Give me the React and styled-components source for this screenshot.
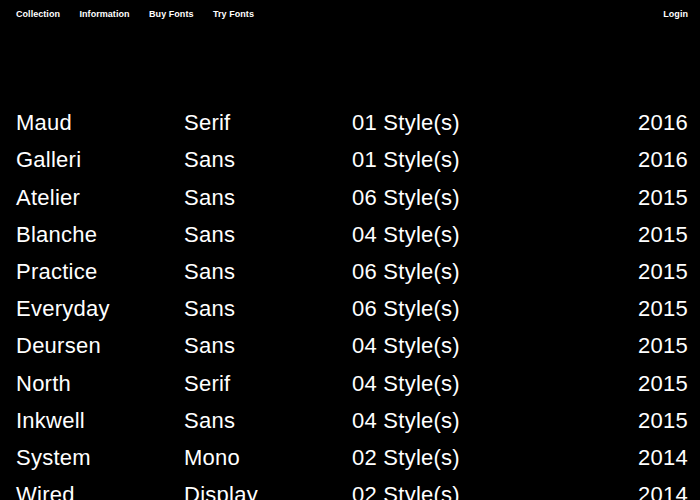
import React from "react";
import styled, { createGlobalStyle } from "styled-components";

const Global = createGlobalStyle`
  html, body { margin: 0; padding: 0; background: #000; }
  body { font-family: "Liberation Sans", Arial, sans-serif; color: #fff; }
`;

const Page = styled.div`
  width: 700px;
  height: 500px;
  overflow: hidden;
  background: #000;
`;

const Nav = styled.nav`
  display: flex;
  justify-content: space-between;
  align-items: center;
  padding: 8px 12px 0 16px;
  height: 12px;
`;

const NavGroup = styled.div`
  display: flex;
  gap: 19.5px;
`;

const NavLink = styled.a`
  font-size: 9px;
  font-weight: 700;
  letter-spacing: 0.05px;
  color: #fff;
  text-decoration: none;
  line-height: 12px;
`;

const List = styled.div`
  margin-top: 84px;
  padding: 0 12px 0 16px;
`;

const Row = styled.div`
  display: grid;
  grid-template-columns: 168px 168px 168px 1fr;
  height: 37.22px;
  align-items: center;
  font-size: 22px;
  letter-spacing: 0.25px;
  line-height: 37px;
`;

const Cell = styled.div`
  text-align: ${(p) => (p.$right ? "right" : "left")};
  white-space: nowrap;
`;

const fonts = [
  ["Maud", "Serif", "01", "2016"],
  ["Galleri", "Sans", "01", "2016"],
  ["Atelier", "Sans", "06", "2015"],
  ["Blanche", "Sans", "04", "2015"],
  ["Practice", "Sans", "06", "2015"],
  ["Everyday", "Sans", "06", "2015"],
  ["Deursen", "Sans", "04", "2015"],
  ["North", "Serif", "04", "2015"],
  ["Inkwell", "Sans", "04", "2015"],
  ["System", "Mono", "02", "2014"],
  ["Wired", "Display", "02", "2014"],
];

export default function App() {
  return (
    <Page>
      <Global />
      <Nav>
        <NavGroup>
          <NavLink href="#">Collection</NavLink>
          <NavLink href="#">Information</NavLink>
          <NavLink href="#">Buy Fonts</NavLink>
          <NavLink href="#">Try Fonts</NavLink>
        </NavGroup>
        <NavLink href="#">Login</NavLink>
      </Nav>
      <List>
        {fonts.map(([name, cat, n, year]) => (
          <Row key={name}>
            <Cell>{name}</Cell>
            <Cell>{cat}</Cell>
            <Cell>{n} Style(s)</Cell>
            <Cell $right>{year}</Cell>
          </Row>
        ))}
      </List>
    </Page>
  );
}
